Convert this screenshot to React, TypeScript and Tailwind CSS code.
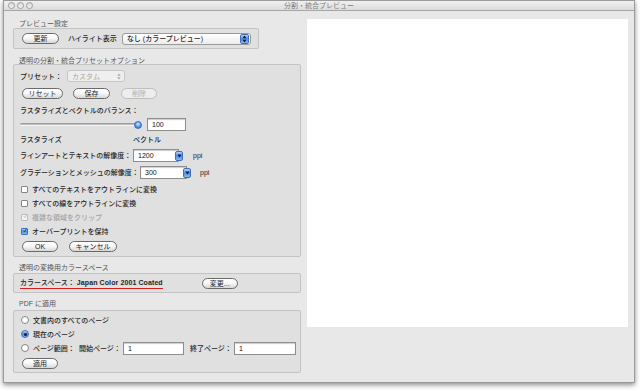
import React from 'react';

const FONT = "font-['Liberation_Sans','Noto_Sans_CJK_JP',sans-serif]";

interface ButtonProps {
  label: string;
  width: string;
  disabled?: boolean;
}

const AquaButton: React.FC<ButtonProps> = ({ label, width, disabled = false }) => (
  <div
    className={`${width} h-[11px] shrink-0 flex items-center justify-center rounded-full border text-[7px] leading-none ${
      disabled
        ? 'border-[#bdbdbd] text-[#adadad] bg-[#ededed]'
        : 'border-[#6a6a6a] text-[#1e1e1e] bg-gradient-to-b from-white via-[#f6f6f6] to-[#d6d6d6]'
    }`}
  >
    {label}
  </div>
);

const Stepper = () => (
  <div className="w-[9px] h-[10px] rounded-[2px] border border-[#3f6fb8] bg-gradient-to-b from-[#b5d2f6] via-[#4d8ee3] to-[#86b7f0] flex items-center justify-center">
    <svg width="5" height="8" viewBox="0 0 5 8">
      <path d="M2.5 0.6 L4.6 3.2 H0.4Z M2.5 7.4 L4.6 4.8 H0.4Z" fill="#0c1c36" />
    </svg>
  </div>
);

const ComboArrow = () => (
  <div className="w-[8px] h-[10px] -ml-[4px] shrink-0 rounded-[2px] border border-[#3f6fb8] bg-gradient-to-b from-[#b5d2f6] via-[#4d8ee3] to-[#86b7f0] flex items-center justify-center">
    <svg width="5" height="4" viewBox="0 0 5 4">
      <path d="M0.4 0.6 H4.6 L2.5 3.6Z" fill="#0c1c36" />
    </svg>
  </div>
);

const TextField: React.FC<{ value: string; width: string }> = ({ value, width }) => (
  <div className={`${width} h-[13px] shrink-0 bg-white border border-[#8e8e8e] shadow-[inset_0_1px_1px_rgba(0,0,0,0.2)] flex items-center pl-[4px] text-[7px] text-[#111] leading-none`}>
    {value}
  </div>
);

const Checkbox: React.FC<{ label: string; checked?: boolean; disabled?: boolean }> = ({ label, checked = false, disabled = false }) => (
  <div className="h-[10px] flex items-center">
    <div
      className={`ml-[1px] w-[7px] h-[7px] rounded-[1px] border flex items-center justify-center ${
        checked && !disabled
          ? 'border-[#3f6fb8] bg-gradient-to-b from-[#b5d2f6] via-[#4d8ee3] to-[#86b7f0]'
          : disabled
          ? 'border-[#bcbcbc] bg-[#f3f3f3]'
          : 'border-[#858585] bg-white'
      }`}
    >
      {checked && (
        <svg width="9" height="9" viewBox="0 0 9 9" className="-mt-[2px] ml-[1px]">
          <path d="M1.5 4.5 L3.5 7 L8 0.8" fill="none" stroke={disabled ? '#a5a5a5' : '#111'} strokeWidth="1.5" />
        </svg>
      )}
    </div>
    <span className={`ml-[4px] text-[7px] leading-none font-medium ${disabled ? 'text-[#a3a3a3]' : 'text-[#1f1f1f]'}`}>{label}</span>
  </div>
);

const Radio: React.FC<{ selected?: boolean }> = ({ selected = false }) => (
  <div
    className={`ml-[1px] w-[8px] h-[8px] shrink-0 rounded-full border flex items-center justify-center ${
      selected ? 'border-[#3f6fb8] bg-gradient-to-b from-[#b5d2f6] via-[#4d8ee3] to-[#86b7f0]' : 'border-[#858585] bg-white'
    }`}
  >
    {selected && <div className="w-[3px] h-[3px] rounded-full bg-[#0c1c36]" />}
  </div>
);

const SectionLabel: React.FC<{ text: string; mt: string }> = ({ text, mt }) => (
  <div className={`${mt} h-[8px] pl-[6px] flex items-center text-[7px] leading-none text-[#555]`}>{text}</div>
);

const Light = () => (
  <div className="w-[7px] h-[7px] rounded-full border border-[#9d9d9d] bg-gradient-to-b from-[#d8d8d8] to-[#f4f4f4]" />
);

export default function App() {
  return (
    <div className={`w-[640px] h-[391px] bg-white overflow-hidden ${FONT}`}>
      <div className="ml-[3px] w-[632px] h-[383px] bg-[#e8e8e8] border border-[#9a9a9a] shadow-[0_2px_5px_rgba(0,0,0,0.45)] flex flex-col">
        {/* Title bar */}
        <div className="h-[10px] shrink-0 relative flex items-center bg-gradient-to-b from-[#f0f0f0] to-[#dcdcdc] border-b border-[#a5a5a5]">
          <div className="flex items-center gap-[2px] pl-[4px]">
            <Light />
            <Light />
            <Light />
          </div>
          <div className="absolute inset-0 flex items-center justify-center text-[7px] leading-none text-[#7a7a7a]">分割・統合プレビュー</div>
        </div>

        <div className="flex flex-1">
          {/* Left column */}
          <div className="w-[303px] shrink-0 pl-[9px] flex flex-col">
            <SectionLabel text="プレビュー設定" mt="mt-[8px]" />
            <div className="mt-[1px] w-[246px] h-[21px] bg-[#e0e0e0] border border-[#c3c3c3] rounded-[2px] flex items-center pl-[8px]">
              <AquaButton label="更新" width="w-[37px]" />
              <span className="ml-[9px] text-[7px] leading-none text-[#1f1f1f] font-medium">ハイライト表示</span>
              <div className="ml-[5px] w-[129px] h-[12px] bg-gradient-to-b from-white to-[#ececec] border border-[#9a9a9a] rounded-[3px] flex items-center justify-between pl-[4px] pr-[1px]">
                <span className="text-[7px] leading-none text-[#1f1f1f] font-medium">なし (カラープレビュー)</span>
                <Stepper />
              </div>
            </div>

            <SectionLabel text="透明の分割・統合プリセットオプション" mt="mt-[7px]" />
            <div className="w-[288px] h-[193px] bg-[#e0e0e0] border border-[#c3c3c3] rounded-[2px] flex flex-col pl-[6px]">
              <div className="mt-[5px] h-[12px] flex items-center">
                <span className="text-[7px] leading-none text-[#1f1f1f] font-medium">プリセット：</span>
                <div className="ml-[5px] w-[58px] h-[12px] bg-[#efefef] border border-[#c6c6c6] rounded-[3px] flex items-center justify-between pl-[4px] pr-[3px] text-[7px] leading-none text-[#a8a8a8]">
                  <span>カスタム</span>
                  <svg width="4" height="7" viewBox="0 0 4 7">
                    <path d="M2 0.5 L3.8 2.8 H0.2Z M2 6.5 L3.8 4.2 H0.2Z" fill="#a8a8a8" />
                  </svg>
                </div>
              </div>
              <div className="mt-[6px] h-[11px] flex items-center pl-[2px]">
                <AquaButton label="リセット" width="w-[41px]" />
                <div className="ml-[10px]">
                  <AquaButton label="保存" width="w-[37px]" />
                </div>
                <div className="ml-[11px]">
                  <AquaButton label="削除" width="w-[36px]" disabled />
                </div>
              </div>
              <div className="mt-[6px] h-[10px] flex items-center text-[7px] leading-none text-[#1f1f1f] font-medium">ラスタライズとベクトルのバランス：</div>
              <div className="mt-[3px] h-[13px] flex items-center">
                <div className="w-[116px] h-[3px] rounded-full bg-gradient-to-b from-[#8c8c8c] to-[#cfcfcf] border-b border-[#f4f4f4]" />
                <div className="-ml-[2px] w-[8px] h-[8px] rounded-full border border-[#3f6fb8] bg-[radial-gradient(circle_at_50%_35%,#d6e8fd,#4d8ee3_60%,#2f68bd)]" />
                <div className="ml-[5px]">
                  <TextField value="100" width="w-[39px]" />
                </div>
              </div>
              <div className="mt-[3px] h-[10px] flex items-center text-[7px] leading-none text-[#1f1f1f] font-medium">
                <span className="w-[113px]">ラスタライズ</span>
                <span>ベクトル</span>
              </div>
              <div className="mt-[5px] h-[13px] flex items-center">
                <span className="w-[113px] text-[7px] leading-none text-[#1f1f1f] font-medium">ラインアートとテキストの解像度：</span>
                <TextField value="1200" width="w-[46px]" />
                <ComboArrow />
                <span className="ml-[10px] text-[7px] leading-none text-[#1f1f1f] font-medium">ppi</span>
              </div>
              <div className="mt-[4px] h-[13px] flex items-center">
                <span className="w-[120px] text-[7px] leading-none text-[#1f1f1f] font-medium">グラデーションとメッシュの解像度：</span>
                <TextField value="300" width="w-[47px]" />
                <ComboArrow />
                <span className="ml-[9px] text-[7px] leading-none text-[#1f1f1f] font-medium">ppi</span>
              </div>
              <div className="mt-[5px]">
                <Checkbox label="すべてのテキストをアウトラインに変換" />
              </div>
              <div className="mt-[4px]">
                <Checkbox label="すべての線をアウトラインに変換" />
              </div>
              <div className="mt-[4px]">
                <Checkbox label="複雑な領域をクリップ" checked disabled />
              </div>
              <div className="mt-[4px]">
                <Checkbox label="オーバープリントを保持" checked />
              </div>
              <div className="mt-[5px] h-[11px] flex items-center pl-[2px]">
                <AquaButton label="OK" width="w-[36px]" />
                <div className="ml-[11px]">
                  <AquaButton label="キャンセル" width="w-[48px]" />
                </div>
              </div>
            </div>

            <SectionLabel text="透明の変換用カラースペース" mt="mt-[6px]" />
            <div className="mt-[2px] w-[288px] h-[20px] bg-[#e0e0e0] border border-[#c3c3c3] rounded-[2px] flex items-center pl-[6px]">
              <div className="shrink-0 whitespace-nowrap h-[11px] flex items-center border-b border-[#d81e1e] text-[7px] leading-none text-[#1f1f1f] font-medium">
                <span className="shrink-0">カラースペース：</span>
                <span className="shrink-0 ml-[2px] font-bold tracking-[0.1px]">Japan Color 2001 Coated</span>
              </div>
              <div className="ml-[39px]">
                <AquaButton label="変更..." width="w-[36px]" />
              </div>
            </div>

            <SectionLabel text="PDF に適用" mt="mt-[6px]" />
            <div className="mt-[3px] w-[288px] h-[63px] bg-[#e0e0e0] border border-[#c3c3c3] rounded-[2px] flex flex-col pl-[6px]">
              <div className="mt-[4px] h-[10px] flex items-center">
                <Radio />
                <span className="ml-[4px] text-[7px] leading-none text-[#1f1f1f] font-medium">文書内のすべてのページ</span>
              </div>
              <div className="mt-[4px] h-[10px] flex items-center">
                <Radio selected />
                <span className="ml-[4px] text-[7px] leading-none text-[#1f1f1f] font-medium">現在のページ</span>
              </div>
              <div className="mt-[3px] h-[12px] flex items-center text-[7px] leading-none text-[#1f1f1f] font-medium">
                <Radio />
                <span className="ml-[4px] w-[46px]">ページ範囲：</span>
                <span className="w-[44px]">開始ページ：</span>
                <TextField value="1" width="w-[61px]" />
                <span className="ml-[6px] w-[44px]">終了ページ：</span>
                <TextField value="1" width="w-[62px]" />
              </div>
              <div className="mt-[4px] h-[11px] flex items-center pl-[2px]">
                <AquaButton label="適用" width="w-[36px]" />
              </div>
            </div>
          </div>

          {/* Preview area */}
          <div className="mt-[8px] w-[321px] h-[308px] bg-white" />
        </div>
      </div>
    </div>
  );
}
